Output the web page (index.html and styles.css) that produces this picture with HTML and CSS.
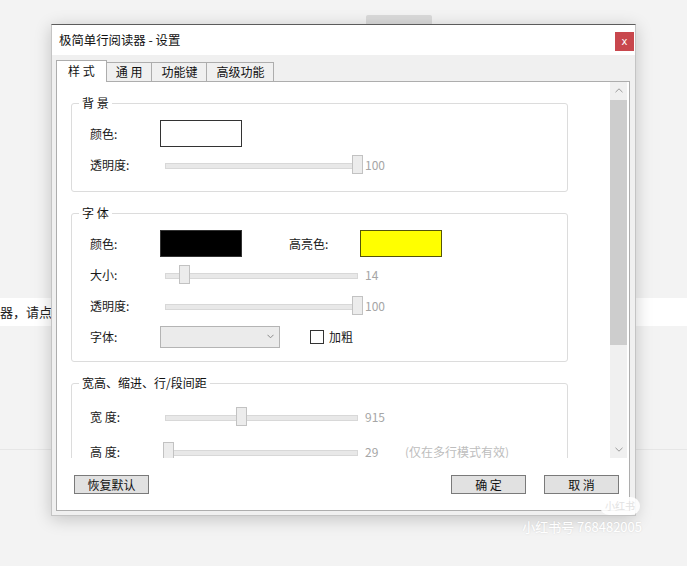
FILE: index.html
```html
<!DOCTYPE html>
<html lang="zh-CN">
<head>
  <meta charset="UTF-8" />
  <meta name="viewport" content="width=device-width, initial-scale=1.0" />
  <title>极简单行阅读器 - 设置</title>
  <link rel="stylesheet" href="styles.css">
</head>
<body>
  <!-- page behind the settings window -->
  <div class="page">
    <div class="page-top"><span class="page-chip"></span></div>
    <div class="page-notice">器，请点击</div>
    <div class="page-rule"></div>
  </div>

  <div class="dialog">
    <div class="titlebar">
      <span class="title">极简单行阅读器 - 设置</span>
      <button class="close">x</button>
    </div>

    <div class="dialog-body">
      <div class="tabs">
        <div class="tab active">样 式</div>
        <div class="tab">通 用</div>
        <div class="tab">功能键</div>
        <div class="tab">高级功能</div>
      </div>

      <div class="tab-page">
        <div class="scroller">
          <div class="scroll-content">

            <fieldset class="group">
              <legend>背 景</legend>
              <div class="group-body">
                <div class="row">
                  <span class="label">颜色:</span>
                  <span class="swatch swatch-white"></span>
                </div>
                <div class="row">
                  <span class="label">透明度:</span>
                  <div class="slider"><span class="thumb" style="left: 192px"></span></div>
                  <span class="value">100</span>
                </div>
              </div>
            </fieldset>

            <fieldset class="group">
              <legend>字 体</legend>
              <div class="group-body group-font">
                <div class="row">
                  <span class="label">颜色:</span>
                  <span class="swatch swatch-black"></span>
                  <span class="label label-hl">高亮色:</span>
                  <span class="swatch swatch-yellow"></span>
                </div>
                <div class="row">
                  <span class="label">大小:</span>
                  <div class="slider"><span class="thumb" style="left: 19px"></span></div>
                  <span class="value">14</span>
                </div>
                <div class="row">
                  <span class="label">透明度:</span>
                  <div class="slider"><span class="thumb" style="left: 192px"></span></div>
                  <span class="value">100</span>
                </div>
                <div class="row">
                  <span class="label">字体:</span>
                  <div class="combo">
                    <svg width="7" height="5" viewBox="0 0 7 5"><path d="M0.5 0.8 L3.5 3.8 L6.5 0.8" fill="none" stroke="#8a8a8a" stroke-width="1"/></svg>
                  </div>
                  <span class="checkbox"></span>
                  <span class="check-label">加粗</span>
                </div>
              </div>
            </fieldset>

            <fieldset class="group">
              <legend>宽高、缩进、行/段间距</legend>
              <div class="group-body group-size">
                <div class="row row-tall">
                  <span class="label">宽 度:</span>
                  <div class="slider"><span class="thumb" style="left: 76px"></span></div>
                  <span class="value">915</span>
                </div>
                <div class="row row-tall">
                  <span class="label">高 度:</span>
                  <div class="slider"><span class="thumb" style="left: 3px"></span></div>
                  <span class="value">29</span>
                  <span class="hint">(仅在多行模式有效)</span>
                </div>
              </div>
            </fieldset>

          </div>

          <div class="scrollbar">
            <span class="sb-btn">
              <svg width="8" height="5" viewBox="0 0 8 5"><path d="M0.5 4.2 L4 0.8 L7.5 4.2" fill="none" stroke="#9a9a9a" stroke-width="1"/></svg>
            </span>
            <span class="sb-thumb"></span>
            <span class="sb-track"></span>
            <span class="sb-btn">
              <svg width="8" height="5" viewBox="0 0 8 5"><path d="M0.5 0.8 L4 4.2 L7.5 0.8" fill="none" stroke="#9a9a9a" stroke-width="1"/></svg>
            </span>
          </div>
        </div>

        <div class="buttons">
          <button class="btn">恢复默认</button>
          <span class="spacer"></span>
          <button class="btn">确 定</button>
          <button class="btn">取 消</button>
        </div>
      </div>
    </div>
  </div>

  <div class="watermark">
    <span class="wm-logo">小红书</span>
    <span class="wm-id">小红书号 768482005</span>
  </div>
</body>
</html>
```

FILE: styles.css
```css
:root {
  --ui-font: "Noto Sans CJK SC", "Noto Sans", sans-serif;
  --face: #f0f0f0;
  --edge: #adadad;
  --group-line: #dcdcdc;
  --muted: #a6a6a6;
}

* { box-sizing: border-box; }

body {
  margin: 0;
  width: 687px;
  height: 566px;
  overflow: hidden;
  position: relative;
  background-color: #f3f3f3;
  font-family: var(--ui-font);
  font-size: 12px;
  color: #1a1a1a;
}

/* background page */
.page-top {
  height: 24px;
  padding: 15px 0 0 366px;
}

.page-chip {
  display: block;
  width: 66px;
  height: 12px;
  background-color: #dadada;
  border-radius: 2px;
}

.page-notice {
  margin-top: 274px;
  height: 28px;
  line-height: 28px;
  background-color: #fff;
  font-size: 13px;
  color: #222;
}

.page-rule {
  margin-top: 123px;
  height: 1px;
  background-color: #e6e6e6;
}

/* settings window */
.dialog {
  position: absolute;
  left: 51px;
  top: 24px;
  width: 585px;
  height: 492px;
  background-color: var(--face);
  border: 1px solid #c4c4c4;
  border-top-color: #5c5c5c;
  box-shadow: 0 3px 16px rgba(0, 0, 0, 0.2);
  display: flex;
  flex-direction: column;
}

.titlebar {
  height: 30px;
  background-color: #fff;
  display: flex;
  align-items: flex-start;
  padding-left: 7px;
}

.title {
  line-height: 30px;
  font-size: 12.4px;
  color: #111;
  flex: 1;
}

.close {
  margin: 7px 1px 0 0;
  width: 19px;
  height: 19px;
  padding: 0;
  border: none;
  background-color: #c8474d;
  color: #fff;
  font-family: "DejaVu Sans", sans-serif;
  font-size: 10px;
  line-height: 18px;
}

.dialog-body {
  flex: 1;
  padding: 5px 5px 4px 4px;
  display: flex;
  flex-direction: column;
}

/* tabs */
.tabs {
  height: 21px;
  display: flex;
  align-items: flex-end;
}

.tab {
  height: 19px;
  line-height: 17px;
  padding: 0 9px;
  border: 1px solid var(--edge);
  border-bottom: none;
  margin-left: -1px;
  background-color: var(--face);
  color: #111;
  white-space: nowrap;
}

.tab.active {
  height: 22px;
  line-height: 20px;
  padding: 0 11px;
  margin-left: 0;
  margin-bottom: -1px;
  background-color: #fff;
  position: relative;
  z-index: 1;
}

.tab-page {
  height: 430px;
  background-color: #fff;
  border: 1px solid var(--edge);
  display: flex;
  flex-direction: column;
}

.scroller {
  height: 376px;
  width: 570px;
  display: flex;
  overflow: hidden;
}

.scroll-content {
  width: 553px;
  padding: 14px 0 0 14px;
  overflow: hidden;
}

/* group boxes */
.group {
  width: 497px;
  margin: 0 0 14px 0;
  padding: 0;
  min-width: 0;
  border: 1px solid var(--group-line);
  border-radius: 3px;
}

.group legend {
  margin-left: 7px;
  padding: 0 3px;
  height: 14px;
  line-height: 14px;
  color: #111;
}

.group-body {
  padding: 8px 0 11px 18px;
}

.group-font { padding-bottom: 9px; }
.group-size { padding: 9px 0 20px 18px; }

.row {
  height: 31px;
  display: flex;
  align-items: center;
}

.row-tall { height: 35px; }

.label {
  width: 70px;
  flex: none;
}

.label-hl {
  width: 71px;
  margin-left: 47px;
}

.swatch {
  width: 82px;
  height: 27px;
  border: 1px solid #333;
}

.swatch-white { background-color: #fff; }
.swatch-black { background-color: #000; }
.swatch-yellow { background-color: #ffff00; border-color: #55550a; }

/* trackbars */
.slider {
  position: relative;
  width: 203px;
  height: 20px;
  flex: none;
}

.slider::before {
  content: "";
  position: absolute;
  left: 5px;
  right: 5px;
  top: 8px;
  height: 4px;
  background-color: #e8e8e8;
  border: 1px solid #d8d8d8;
}

.thumb {
  position: absolute;
  top: 0;
  width: 11px;
  height: 19px;
  background-color: #ececec;
  border: 1px solid #c2c2c2;
}

.value {
  width: 40px;
  margin-left: 2px;
  color: var(--muted);
}

.hint {
  color: #bdbdbd;
}

.combo {
  width: 120px;
  height: 22px;
  background-color: #ebebeb;
  border: 1px solid #b4b4b4;
  display: flex;
  align-items: center;
  justify-content: flex-end;
  padding-right: 5px;
}

.checkbox {
  width: 14px;
  height: 14px;
  margin-left: 30px;
  border: 1px solid #333;
  background-color: #fff;
}

.check-label {
  margin-left: 5px;
}

/* scrollbar column */
.scrollbar {
  width: 17px;
  background-color: var(--face);
  display: flex;
  flex-direction: column;
}

.sb-btn {
  height: 17px;
  display: flex;
  align-items: center;
  justify-content: center;
}

.sb-thumb {
  margin-top: 1px;
  height: 245px;
  background-color: #cdcdcd;
}

.sb-track { flex: 1; }

/* bottom buttons */
.buttons {
  flex: 1;
  display: flex;
  align-items: flex-start;
  gap: 18px;
  padding: 17px 10px 0 17px;
}

.spacer { flex: 1; }

.btn {
  width: 75px;
  height: 19px;
  padding: 0;
  border: 1px solid #7a7a7a;
  background-color: #e1e1e1;
  font-family: var(--ui-font);
  font-size: 12px;
  line-height: 16px;
  color: #111;
}

/* watermark */
.watermark {
  position: absolute;
  right: 45px;
  top: 497px;
  display: flex;
  flex-direction: column;
  align-items: flex-end;
  gap: 5px;
}

.wm-logo {
  width: 40px;
  height: 18px;
  margin-right: 2px;
  border-radius: 9px;
  background-color: rgba(255, 255, 255, 0.9);
  color: #e2e2e2;
  font-size: 10px;
  line-height: 18px;
  text-align: center;
}

.wm-id {
  color: #fff;
  font-size: 13px;
  line-height: 14px;
  text-shadow: 0 0 2px rgba(0, 0, 0, 0.12);
}
```
